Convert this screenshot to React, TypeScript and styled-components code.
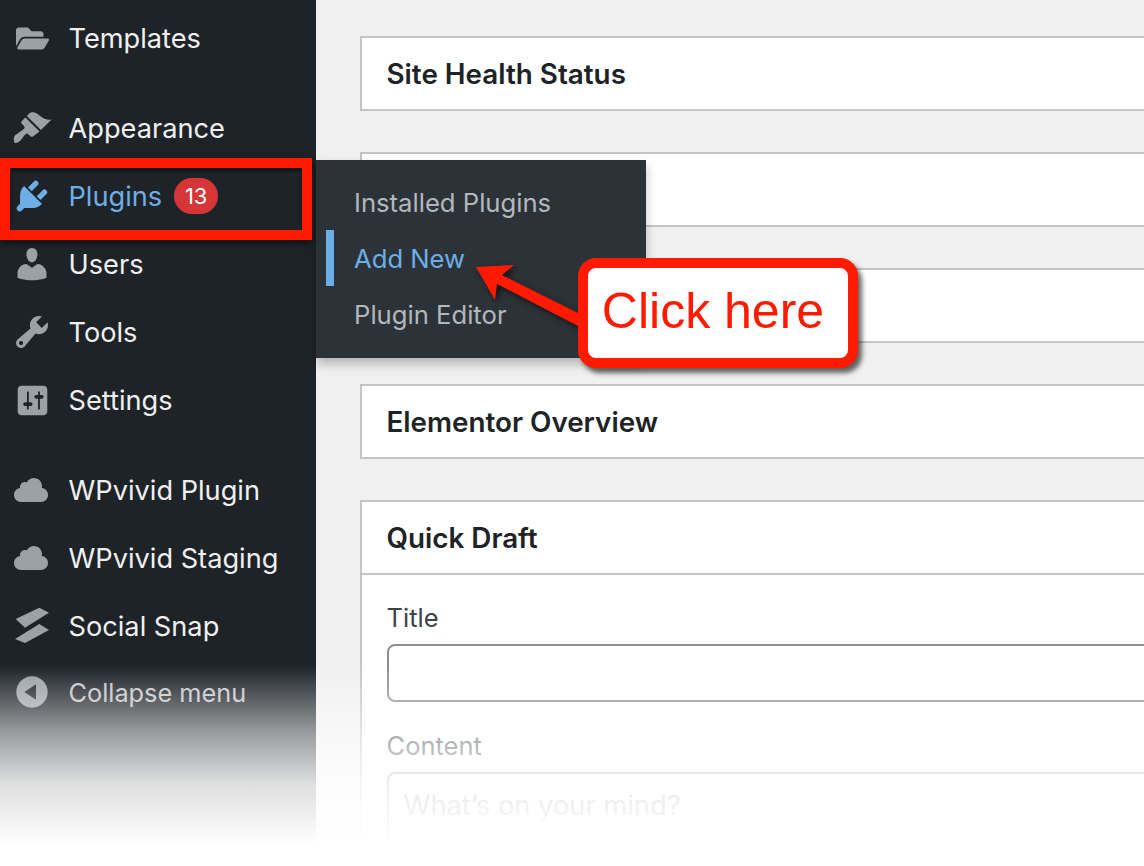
import styled, {createGlobalStyle} from 'styled-components';
import {FaFolderOpen} from 'react-icons/fa';
import type {ReactNode} from 'react';

const GlobalStyle = createGlobalStyle`
  html, body {
    margin: 0;
    padding: 0;
    background: #fff;
    font-family: Inter, "Liberation Sans", sans-serif;
  }
`;

const Dash = ({d, size = 40}: {d: string; size?: number}) => (
  <svg viewBox="0 0 20 20" width={size} height={size} fill="currentColor">
    <path d={d} />
  </svg>
);

const icons = {
  appearance:
    'M14.48 11.06L7.41 3.99l1.5-1.5c.5-.56 2.3-.47 3.51.32 1.21.8 1.43 1.28 2.91 2.1 1.18.64 2.45 1.26 4.45.85zm-.71.71L6.7 4.7 4.93 6.47c-.39.39-.39 1.02 0 1.41l1.06 1.06c.39.39.39 1.03 0 1.42-.6.6-1.43 1.11-2.21 1.69-.35.26-.7.53-1.01.84C1.43 13.23.4 14.84 1.2 17.26c.87.86 2.46-.42 3-.96.31-.31.58-.66.84-1.01.58-.78 1.09-1.61 1.69-2.21.39-.39 1.03-.39 1.42 0l1.06 1.06c.39.39 1.02.39 1.41 0z',
  plugins:
    'M13.11 4.36L9.87 7.6 8 5.73l3.24-3.24c.35-.34 1.05-.2 1.56.32.52.51.66 1.21.31 1.55zm-8 1.77l.91-1.12 9.01 9.01-1.19.84c-.71.71-2.63 1.16-3.82 1.16H6.14L4.9 17.26c-.59.59-1.54.59-2.12 0-.59-.58-.59-1.53 0-2.12l1.24-1.24v-3.88c0-1.13.4-3.19 1.09-3.89zm7.26 3.97l3.24-3.24c.34-.35 1.04-.21 1.55.31.52.51.66 1.21.31 1.55l-3.24 3.25z',
  users:
    'M10 9.25c-2.27 0-2.73-3.44-2.73-3.44C7 4.02 7.82 2 9.97 2c2.16 0 2.98 2.02 2.71 3.81 0 0-.41 3.44-2.68 3.44zm0 2.57L12.72 10c2.39 0 4.52 2.33 4.52 4.53v2.49s-3.65 1.13-7.24 1.13c-3.65 0-7.24-1.13-7.24-1.13v-2.49c0-2.25 1.94-4.48 4.47-4.48z',
  tools:
    'M16.68 9.77c-1.34 1.34-3.3 1.67-4.95.99l-5.41 6.52c-.99.99-2.59.99-3.58 0s-.99-2.59 0-3.57l6.52-5.42c-.68-1.65-.35-3.61.99-4.95 1.28-1.28 3.12-1.62 4.72-1.06l-2.89 2.89 2.82 2.82 2.86-2.87c.53 1.58.18 3.39-1.08 4.65zM3.81 16.21c.4.39 1.04.39 1.43 0 .4-.4.4-1.04 0-1.43-.39-.4-1.03-.4-1.43 0-.39.39-.39 1.03 0 1.43z',
  settings:
    'M18 16V4c0-1.1-.9-2-2-2H4c-1.1 0-2 .9-2 2v12c0 1.1.9 2 2 2h12c1.1 0 2-.9 2-2zM8 11h1c.55 0 1 .45 1 1s-.45 1-1 1H8v1.5c0 .28-.22.5-.5.5s-.5-.22-.5-.5V13H6c-.55 0-1-.45-1-1s.45-1 1-1h1V5.5c0-.28.22-.5.5-.5s.5.22.5.5V11zm5-2h-1c-.55 0-1-.45-1-1s.45-1 1-1h1V5.5c0-.28.22-.5.5-.5s.5.22.5.5V7h1c.55 0 1 .45 1 1s-.45 1-1 1h-1v5.5c0 .28-.22.5-.5.5s-.5-.22-.5-.5V9z',
  cloud:
    'M14.9 9c1.8.2 3.1 1.7 3.1 3.5 0 1.9-1.6 3.5-3.5 3.5h-10C2.6 16 1 14.4 1 12.5 1 10.7 2.3 9.3 4.1 9 4 8.9 4 8.7 4 8.5 4 7.1 5.1 6 6.5 6c.3 0 .7.1.9.2C8.1 4.9 9.4 4 11 4c2.2 0 4 1.8 4 4 0 .4-.1.7-.1 1z',
  collapse:
    'M10 2.16c4.33 0 7.84 3.51 7.84 7.84s-3.51 7.84-7.84 7.84S2.16 14.33 2.16 10 5.71 2.16 10 2.16zm2 11.72V6.12L6.18 9.97z',
};

const SnapIcon = () => (
  <svg viewBox="0 0 40 40" width="40" height="40" fill="currentColor">
    <polygon points="3.700,13 27.300,1.700 37,6.700 13,21.700" />
    <polygon points="3,33 27.300,18 37,24 13,37" />
  </svg>
);

function App() {
  return (
    <Page>
      <GlobalStyle />
      <Sidebar>
        <MenuItem label="Templates" icon={<FolderIcon />} />
        <MenuGap />
        <MenuItem label="Appearance" icon={<Dash d={icons.appearance} />} />
        <MenuItem active label="Plugins" icon={<Dash d={icons.plugins} />}>
          <Badge>13</Badge>
        </MenuItem>
        <MenuItem label="Users" icon={<Dash d={icons.users} />} />
        <MenuItem label="Tools" icon={<Dash d={icons.tools} />} />
        <MenuItem label="Settings" icon={<Dash d={icons.settings} size={37} />} />
        <MenuGap />
        <MenuItem label="WPvivid Plugin" icon={<Dash d={icons.cloud} />} />
        <MenuItem label="WPvivid Staging" icon={<Dash d={icons.cloud} />} />
        <MenuItem label="Social Snap" icon={<SnapIcon />} />
        <CollapseRow>
          <IconSlot>
            <Dash d={icons.collapse} />
          </IconSlot>
          <span>Collapse menu</span>
        </CollapseRow>
      </Sidebar>

      <Main>
        <Card>
          <CardTitle>Site Health Status</CardTitle>
        </Card>
        <Card />
        <Card />
        <Card>
          <CardTitle>Elementor Overview</CardTitle>
        </Card>
        <Card>
          <CardTitle>Quick Draft</CardTitle>
          <DraftForm>
            <FieldLabel>Title</FieldLabel>
            <TitleInput />
            <FieldLabel>Content</FieldLabel>
            <ContentInput placeholder="What’s on your mind?" />
          </DraftForm>
        </Card>
      </Main>

      <Flyout>
        <FlyoutItem>Installed Plugins</FlyoutItem>
        <FlyoutItem active>Add New</FlyoutItem>
        <FlyoutItem>Plugin Editor</FlyoutItem>
      </Flyout>

      <Highlight />

      <Arrow viewBox="0 0 130 70" width="130" height="70">
        <polygon
          fill="#ff1a00"
          points="6,7 44,5 32,15 108,53 108,66 27,24 25,40"
        />
      </Arrow>
      <Callout>Click here</Callout>

      <Fade />
    </Page>
  );
}

function MenuItem(props: {
  label: string;
  icon: ReactNode;
  active?: boolean;
  children?: ReactNode;
}) {
  return (
    <Row active={props.active}>
      <IconSlot active={props.active}>{props.icon}</IconSlot>
      <span>{props.label}</span>
      {props.children}
    </Row>
  );
}

const Page = styled.div`
  position: relative;
  display: flex;
  width: 1144px;
  height: 866px;
  overflow: hidden;
  background: #f0f0f1;
`;
const Sidebar = styled.div`
  flex: 0 0 316px;
  padding-top: 4px;
  box-sizing: border-box;
  background: #1e2328;
`;
const Row = styled.div<{active?: boolean}>`
  display: flex;
  align-items: center;
  height: 68px;
  padding-left: 12px;
  color: ${(props) => (props.active ? '#6eaee6' : '#f0f0f1')};
  font-size: 27.2px;
`;
const MenuGap = styled.div`
  height: 22px;
`;
const IconSlot = styled.div<{active?: boolean}>`
  display: flex;
  justify-content: center;
  flex: 0 0 40px;
  margin-right: 16.5px;
  color: ${(props) => (props.active ? '#6eaee6' : '#9ca1a7')};
`;
const FolderIcon = styled(FaFolderOpen)`
  width: 33px;
  height: 33px;
`;
const Badge = styled.span`
  display: flex;
  align-items: center;
  justify-content: center;
  width: 44px;
  height: 36px;
  margin-left: 12px;
  border-radius: 18px;
  background: #d63638;
  color: #fff;
  font-size: 22px;
`;
const CollapseRow = styled.div`
  display: flex;
  align-items: center;
  height: 64px;
  padding-left: 12px;
  color: #c3c4c7;
  font-size: 25.3px;
`;
const Main = styled.div`
  display: flex;
  flex-direction: column;
  gap: 41px;
  flex: 1;
  min-width: 0;
  padding: 36px 0 0 44px;
`;
const Card = styled.div`
  flex: 0 0 auto;
  box-sizing: border-box;
  width: 900px;
  min-height: 75px;
  border: 2px solid #c3c4c7;
  background: #fff;
`;
const CardTitle = styled.div`
  height: 71px;
  padding-left: 24.5px;
  color: #1d2327;
  font-size: 27.8px;
  font-weight: 600;
  line-height: 73px;
`;
const DraftForm = styled.div`
  display: flex;
  flex-direction: column;
  padding: 27px 24.5px 0;
  border-top: 2px solid #c3c4c7;
`;
const FieldLabel = styled.div`
  height: 32px;
  margin-bottom: 10px;
  color: #3c434a;
  font-size: 25.5px;
  line-height: 32px;
`;
const TitleInput = styled.div`
  height: 58px;
  margin-bottom: 28px;
  box-sizing: border-box;
  border: 2px solid #8c8f94;
  border-radius: 8px;
`;
const ContentInput = styled.textarea`
  height: 200px;
  padding: 15px;
  box-sizing: border-box;
  border: 2px solid #8c8f94;
  border-radius: 8px;
  font-family: Inter, "Liberation Sans", sans-serif;
  font-size: 27.3px;
  resize: none;
  &::placeholder {
    color: #646970;
  }
`;
const Flyout = styled.div`
  position: absolute;
  top: 160px;
  left: 316px;
  display: flex;
  flex-direction: column;
  width: 330px;
  height: 198px;
  padding: 14px 0 0 10px;
  box-sizing: border-box;
  background: #2c3338;
  box-shadow: 0 6px 10px rgba(0, 0, 0, 0.25);
`;
const FlyoutItem = styled.div<{active?: boolean}>`
  height: 56px;
  padding-left: 20px;
  border-left: 8px solid ${(props) => (props.active ? '#6eaee6' : 'transparent')};
  color: ${(props) => (props.active ? '#6eaee6' : '#b4b7bb')};
  font-size: 25.65px;
  line-height: 57px;
`;
const Highlight = styled.div`
  position: absolute;
  top: 158px;
  left: 0;
  width: 312px;
  height: 82px;
  box-sizing: border-box;
  border: 10px solid #ff1a00;
  box-shadow: 0 3px 6px rgba(0, 0, 0, 0.55), inset 0 3px 3px rgba(0, 0, 0, 0.5);
`;
const Arrow = styled.svg`
  position: absolute;
  top: 260px;
  left: 470px;
  filter: drop-shadow(3px 3px 3px rgba(0, 0, 0, 0.65));
`;
const Callout = styled.div`
  position: absolute;
  top: 258px;
  left: 578px;
  display: flex;
  align-items: center;
  justify-content: center;
  width: 280px;
  height: 110px;
  padding: 0 10px 4px 0;
  box-sizing: border-box;
  border: 10px solid #ff1a00;
  border-radius: 18px;
  background: #fff;
  box-shadow: 4px 5px 5px rgba(0, 0, 0, 0.6);
  color: #ff1a00;
  font-family: "Liberation Sans", Arial, sans-serif;
  font-size: 50px;
`;
const Fade = styled.div`
  position: absolute;
  top: 665px;
  left: 0;
  right: 0;
  bottom: 0;
  background: linear-gradient(
    to bottom,
    rgba(255, 255, 255, 0) 0,
    rgba(255, 255, 255, 0.55) 68px,
    rgba(255, 255, 255, 0.85) 118px,
    #fff 180px
  );
`;

export default App;
